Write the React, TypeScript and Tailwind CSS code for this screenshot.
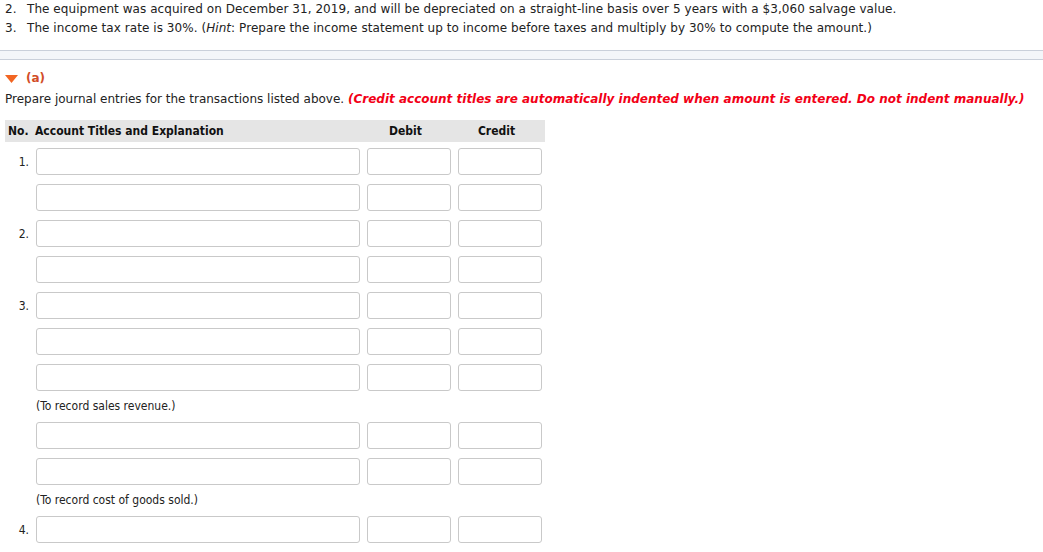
import React from "react";

const verdana = { fontFamily: "'DejaVu Sans', Verdana, sans-serif" };

type Row =
  | { kind: "input"; no?: string }
  | { kind: "caption"; text: string };

const rows: Row[] = [
  { kind: "input", no: "1." },
  { kind: "input" },
  { kind: "input", no: "2." },
  { kind: "input" },
  { kind: "input", no: "3." },
  { kind: "input" },
  { kind: "input" },
  { kind: "caption", text: "(To record sales revenue.)" },
  { kind: "input" },
  { kind: "input" },
  { kind: "caption", text: "(To record cost of goods sold.)" },
  { kind: "input", no: "4." },
];

const Box: React.FC<{ className?: string }> = ({ className }) => (
  <div
    className={
      "h-[27px] rounded-[3px] border border-[#c9c9c9] bg-white " +
      (className || "")
    }
  />
);

const EntryRow: React.FC<{ no?: string }> = ({ no }) => (
  <div className="mt-[9px] flex items-center first:mt-0">
    <div className="w-[31px] pr-[7px] text-right text-[12px] text-[#222]">
      {no}
    </div>
    <Box className="w-[324px]" />
    <Box className="ml-[7px] w-[84px]" />
    <Box className="ml-[7px] w-[84px]" />
  </div>
);

export default function App() {
  return (
    <div
      className="min-h-[552px] w-[1043px] bg-white text-[12px] text-[#222]"
      style={verdana}
    >
      <ol className="px-[5px] leading-[19px] tracking-[0.06px]">
        <li className="flex">
          <span className="w-[22px]">2.</span>
          <span>
            The equipment was acquired on December 31, 2019, and will be
            depreciated on a straight-line basis over 5 years with a $3,060
            salvage value.
          </span>
        </li>
        <li className="flex">
          <span className="w-[22px]">3.</span>
          <span>
            The income tax rate is 30%. (<i>Hint</i>: Prepare the income
            statement up to income before taxes and multiply by 30% to compute
            the amount.)
          </span>
        </li>
      </ol>

      <div className="mt-[12px] h-[10px] border-y border-[#c9d0da] bg-[#f3f6f9]" />

      <div className="mt-[9px] flex items-center px-[5px] leading-[19px]">
        <svg width="13" height="8" viewBox="0 0 13 8" className="mr-[8px]">
          <polygon points="0,0 13,0 6.5,8" fill="#f26522" />
        </svg>
        <span className="font-bold text-[#d24d28]">(a)</span>
      </div>

      <div className="px-[5px] pt-[2px] leading-[19px]">
        Prepare journal entries for the transactions listed above.{" "}
        <b className="italic text-[#f20016]">
          (Credit account titles are automatically indented when amount is
          entered. Do not indent manually.)
        </b>
      </div>

      <div
        className="ml-[5px] mt-[11px] w-[540px]"
        style={{ fontFamily: "Tahoma, 'DejaVu Sans Condensed', 'DejaVu Sans', sans-serif", fontStretch: "condensed" }}
      >
        <div className="flex h-[22px] items-center bg-[#e5e5e5] text-[12px] font-bold text-[#111]">
          <span className="w-[30px] pl-[3px]">No.</span>
          <span className="w-[325px]">Account Titles and Explanation</span>
          <span className="w-[91px] text-center">Debit</span>
          <span className="w-[91px] text-center">Credit</span>
        </div>

        <div className="pt-[6px]">
          {rows.map((r, i) =>
            r.kind === "input" ? (
              <EntryRow key={i} no={r.no} />
            ) : (
              <div
                key={i}
                className="flex h-[31px] items-center pb-[2px] pl-[31px] text-[12px] text-[#222] [&+div]:mt-0"
              >
                {r.text}
              </div>
            )
          )}
        </div>
      </div>
    </div>
  );
}
